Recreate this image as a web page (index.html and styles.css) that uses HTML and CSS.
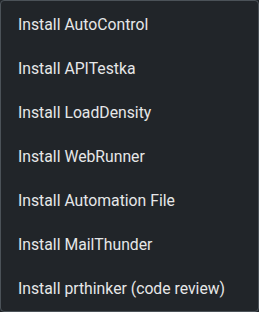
FILE: index.html
```html
<!DOCTYPE html>
<html>
<head>
<meta charset="utf-8">
<link rel="stylesheet" href="styles.css">
</head>
<body>
<ul class="menu">
  <li class="item">Install AutoControl</li>
  <li class="item">Install APITestka</li>
  <li class="item">Install LoadDensity</li>
  <li class="item">Install WebRunner</li>
  <li class="item">Install Automation File</li>
  <li class="item">Install MailThunder</li>
  <li class="item">Install prthinker (code review)</li>
</ul>
</body>
</html>
```
FILE: styles.css
```css
html, body {
  margin: 0;
  padding: 0;
  background: #212529;
}
.menu {
  box-sizing: border-box;
  width: 259px;
  height: 312px;
  margin: 0;
  padding: 1px 0;
  list-style: none;
  background: #212529;
  border: 1px solid #4b5258;
  border-radius: 4px;
  display: flex;
  flex-direction: column;
}
.item {
  height: 44px;
  display: flex;
  align-items: center;
  padding-left: 17px;
  font-family: Roboto, "Liberation Sans", sans-serif;
  font-size: 15.75px;
  color: #e6e7e8;
  white-space: nowrap;
}
```
